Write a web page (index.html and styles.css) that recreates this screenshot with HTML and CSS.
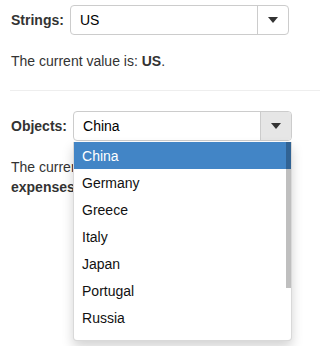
FILE: index.html
```html
<!DOCTYPE html>
<html lang="en">
<head>
    <meta charset="UTF-8">
    <meta name="viewport" content="width=device-width, initial-scale=1.0">
    <title>Combo Box</title>
    <link rel="stylesheet" href="styles.css">
</head>
<body>
    <div class="page">
        <div class="field">
            <label class="field-label">Strings:</label>
            <div class="combo">
                <span class="combo-value">US</span>
                <span class="combo-btn"><span class="caret"></span></span>
            </div>
        </div>
        <p class="value">The current value is: <b>US</b>.</p>

        <hr class="divider">

        <div class="field">
            <label class="field-label">Objects:</label>
            <div class="combo combo-open">
                <span class="combo-value">China</span>
                <span class="combo-btn"><span class="caret"></span></span>
                <div class="menu">
                    <ul class="menu-list">
                        <li class="menu-item active">China</li>
                        <li class="menu-item">Germany</li>
                        <li class="menu-item">Greece</li>
                        <li class="menu-item">Italy</li>
                        <li class="menu-item">Japan</li>
                        <li class="menu-item">Portugal</li>
                        <li class="menu-item">Russia</li>
                        <li class="menu-item">Spain</li>
                        <li class="menu-item">UK</li>
                        <li class="menu-item">US</li>
                    </ul>
                    <span class="thumb"></span>
                </div>
            </div>
        </div>
        <p class="value">The current value is: China, with<br><b>expenses</b> of 1.2 billion.</p>
    </div>
</body>
</html>
```

FILE: styles.css
```css
* {
    margin: 0;
    padding: 0;
    box-sizing: border-box;
}

html,
body {
    min-height: 100vh;
}

body {
    font-family: "Liberation Sans", Arial, sans-serif;
    font-size: 14px;
    line-height: 20px;
    color: #333;
    background: #fff;
}

.page {
    min-height: 346px;
    padding: 5px 0 0 11px;
}

.field {
    display: flex;
    align-items: center;
    gap: 6px;
}

.field-label {
    font-weight: bold;
    color: #333;
}

.combo {
    position: relative;
    display: flex;
    width: 219px;
    height: 30px;
    border: 1px solid #ccc;
    border-radius: 4px;
    background: #fff;
}

.combo-value {
    flex: 1;
    padding-left: 9px;
    line-height: 28px;
    color: #000;
}

.combo-btn {
    display: flex;
    align-items: center;
    justify-content: center;
    width: 31px;
    border-left: 1px solid #ccc;
    border-radius: 0 3px 3px 0;
}

.combo-open .combo-btn {
    background: #e6e6e6;
}

.caret {
    width: 0;
    height: 0;
    border-left: 5px solid transparent;
    border-right: 5px solid transparent;
    border-top: 6px solid #333;
}

.value {
    margin-top: 16px;
}

.divider {
    margin: 19px 0 20px -1px;
    border: 0;
    border-top: 1px solid #eee;
}

.menu {
    position: absolute;
    top: calc(100% + 2px);
    left: -1px;
    width: 219px;
    height: 199px;
    overflow: hidden;
    background: #fff;
    border: 1px solid rgba(0, 0, 0, 0.15);
    border-top: 0;
    border-radius: 0 0 4px 4px;
    box-shadow: 0 6px 12px rgba(0, 0, 0, 0.175);
    z-index: 10;
}

.menu-list {
    max-height: 191px;
    overflow: hidden;
    list-style: none;
}

.menu-item {
    height: 27px;
    padding: 1px 0 0 8px;
    line-height: 26px;
    color: #111;
}

.menu-item.active {
    background: #4285c6;
    color: #fff;
}

.thumb {
    position: absolute;
    top: 0;
    right: 0;
    width: 5px;
    height: 146px;
    background: rgba(0, 0, 0, 0.25);
}
```
